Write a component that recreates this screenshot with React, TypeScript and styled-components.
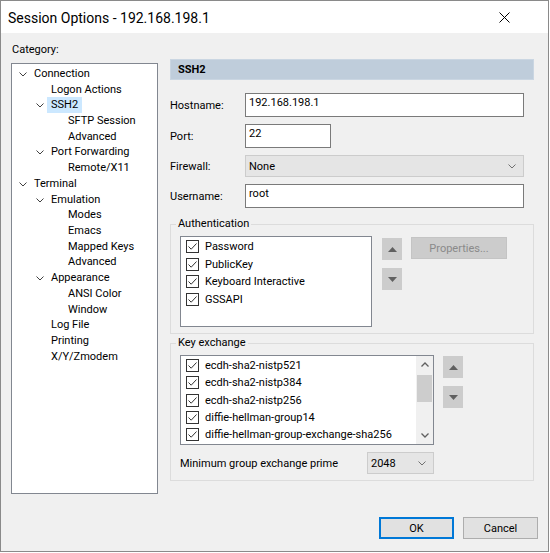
import React from "react";
import styled, { createGlobalStyle } from "styled-components";

// Page reset
const GlobalStyle = createGlobalStyle`
  body {
    margin: 0;
    background: #ffffff;
    font-family: Roboto, "Noto Sans", sans-serif;
  }
`;

type TreeNode = {
  label: string;
  level: number;
  expandable?: boolean;
  selected?: boolean;
};

const TREE: TreeNode[] = [
  { label: "Connection", level: 0, expandable: true },
  { label: "Logon Actions", level: 1 },
  { label: "SSH2", level: 1, expandable: true, selected: true },
  { label: "SFTP Session", level: 2 },
  { label: "Advanced", level: 2 },
  { label: "Port Forwarding", level: 1, expandable: true },
  { label: "Remote/X11", level: 2 },
  { label: "Terminal", level: 0, expandable: true },
  { label: "Emulation", level: 1, expandable: true },
  { label: "Modes", level: 2 },
  { label: "Emacs", level: 2 },
  { label: "Mapped Keys", level: 2 },
  { label: "Advanced", level: 2 },
  { label: "Appearance", level: 1, expandable: true },
  { label: "ANSI Color", level: 2 },
  { label: "Window", level: 2 },
  { label: "Log File", level: 1 },
  { label: "Printing", level: 1 },
  { label: "X/Y/Zmodem", level: 1 },
];

const AUTH_METHODS = ["Password", "PublicKey", "Keyboard Interactive", "GSSAPI"];

const KEX_METHODS = [
  "ecdh-sha2-nistp521",
  "ecdh-sha2-nistp384",
  "ecdh-sha2-nistp256",
  "diffie-hellman-group14",
  "diffie-hellman-group-exchange-sha256",
];

// Small drawings
const Chevron = ({ up = false }: { up?: boolean }) => (
  <svg width="8" height="5" viewBox="0 0 8 5">
    <polyline
      points={up ? "0.5,4.5 4,1 7.5,4.5" : "0.5,0.5 4,4 7.5,0.5"}
      fill="none"
      stroke="#404040"
      strokeWidth="1"
    />
  </svg>
);

const Triangle = ({ up = false }: { up?: boolean }) => (
  <svg width="9" height="5" viewBox="0 0 9 5">
    <polygon points={up ? "0,5 4.5,0 9,5" : "0,0 4.5,5 9,0"} fill="#606060" />
  </svg>
);

const CheckMark = () => (
  <svg width="11" height="11" viewBox="0 0 11 11">
    <polyline
      points="1.5,5.5 4.2,8.2 9.5,2.5"
      fill="none"
      stroke="#333333"
      strokeWidth="1"
    />
  </svg>
);

const CloseIcon = () => (
  <svg width="11" height="11" viewBox="0 0 11 11">
    <path d="M0.5 0.5 L10.5 10.5 M10.5 0.5 L0.5 10.5" stroke="#000" strokeWidth="1" />
  </svg>
);

const CheckItem = ({ label, height }: { label: string; height: number }) => (
  <ListRow $height={height}>
    <CheckBox>
      <CheckMark />
    </CheckBox>
    {label}
  </ListRow>
);

const App: React.FC = () => (
  <>
    <GlobalStyle />
    <Window>
      <TitleBar>
        <TitleText>Session Options - 192.168.198.1</TitleText>
        <CloseButton>
          <CloseIcon />
        </CloseButton>
      </TitleBar>

      <Content>
        <LeftColumn>
          <CategoryLabel>Category:</CategoryLabel>
          <Tree>
            {TREE.map((node, i) => (
              <TreeRow key={i} $level={node.level}>
                <Expander>{node.expandable && <Chevron />}</Expander>
                <TreeLabel $selected={node.selected}>{node.label}</TreeLabel>
              </TreeRow>
            ))}
          </Tree>
        </LeftColumn>

        <RightColumn>
          <PanelHeader>SSH2</PanelHeader>

          <FieldRow $top={13}>
            <FieldLabel>Hostname:</FieldLabel>
            <TextField $width={279} defaultValue="192.168.198.1" readOnly />
          </FieldRow>
          <FieldRow $top={7}>
            <FieldLabel>Port:</FieldLabel>
            <TextField $width={86} defaultValue="22" readOnly />
          </FieldRow>
          <FieldRow $top={7}>
            <FieldLabel>Firewall:</FieldLabel>
            <DropDown $width={279}>
              None
              <Chevron />
            </DropDown>
          </FieldRow>
          <FieldRow $top={7}>
            <FieldLabel>Username:</FieldLabel>
            <TextField $width={279} defaultValue="root" readOnly />
          </FieldRow>

          <GroupBox $top={9}>
            <GroupTitle>Authentication</GroupTitle>
            <GroupRow>
              <ListBox $width={192} $height={91}>
                <ListItems>
                  {AUTH_METHODS.map((m) => (
                    <CheckItem key={m} label={m} height={17.5} />
                  ))}
                </ListItems>
              </ListBox>
              <ArrowColumn $left={10} $top={2}>
                <ArrowButton>
                  <Triangle up />
                </ArrowButton>
                <ArrowButton>
                  <Triangle />
                </ArrowButton>
              </ArrowColumn>
              <DisabledButton>Properties...</DisabledButton>
            </GroupRow>
          </GroupBox>

          <GroupBox $top={2}>
            <GroupTitle>Key exchange</GroupTitle>
            <GroupRow>
              <ListBox $width={254} $height={90}>
                <ListItems>
                  {KEX_METHODS.map((m) => (
                    <CheckItem key={m} label={m} height={17.3} />
                  ))}
                </ListItems>
                <ScrollBar>
                  <ScrollArrow>
                    <Chevron up />
                  </ScrollArrow>
                  <ScrollThumb />
                  <ScrollArrow>
                    <Chevron />
                  </ScrollArrow>
                </ScrollBar>
              </ListBox>
              <ArrowColumn $left={9} $top={1}>
                <ArrowButton>
                  <Triangle up />
                </ArrowButton>
                <ArrowButton>
                  <Triangle />
                </ArrowButton>
              </ArrowColumn>
            </GroupRow>
            <PrimeRow>
              <PrimeLabel>Minimum group exchange prime</PrimeLabel>
              <DropDown $width={67}>
                2048
                <Chevron />
              </DropDown>
            </PrimeRow>
          </GroupBox>
        </RightColumn>
      </Content>

      <Footer>
        <DialogButton $default>OK</DialogButton>
        <DialogButton>Cancel</DialogButton>
      </Footer>
    </Window>
  </>
);

export default App;

// Styled-Components
// Dialog window
const Window = styled.div`
  box-sizing: border-box;
  width: 549px;
  height: 552px;
  display: flex;
  flex-direction: column;
  border: 1px solid #8a8a8a;
  background: #f0f0f0;
  font-size: 11px;
  color: #000;
`;

// Title bar
const TitleBar = styled.div`
  height: 32px;
  display: flex;
  align-items: center;
  justify-content: space-between;
  padding: 0 38px 0 7px;
  background: #ffffff;
`;

const TitleText = styled.span`
  font-size: 14px;
  line-height: 18px;
  margin-top: 1px;
`;

const CloseButton = styled.span`
  display: flex;
  margin-top: 1px;
`;

// Main area
const Content = styled.div`
  flex: 1;
  display: flex;
  align-items: flex-start;
  gap: 12px;
  padding: 10px 0 0 10px;
`;

const LeftColumn = styled.div`
  display: flex;
  flex-direction: column;
  width: 147px;
`;

const CategoryLabel = styled.div`
  line-height: 14px;
  padding-left: 1px;
`;

// Category tree
const Tree = styled.div`
  box-sizing: border-box;
  height: 431px;
  margin-top: 6px;
  padding-top: 2px;
  border: 1px solid #828790;
  background: #ffffff;
`;

const TreeRow = styled.div<{ $level: number }>`
  height: 15.72px;
  display: flex;
  align-items: center;
  padding-left: ${(p) => 7 + p.$level * 17}px;
  white-space: nowrap;
`;

const Expander = styled.span`
  width: 15px;
  flex-shrink: 0;
  display: flex;
  align-items: center;
  padding-top: 1px;
`;

const TreeLabel = styled.span<{ $selected?: boolean }>`
  line-height: 16px;
  padding: 0 4px;
  margin-left: -4px;
  background: ${(p) => (p.$selected ? "#cce8ff" : "transparent")};
`;

// Settings panel
const RightColumn = styled.div`
  width: 364px;
  display: flex;
  flex-direction: column;
  margin-top: 16px;
`;

const PanelHeader = styled.div`
  box-sizing: border-box;
  height: 21px;
  display: flex;
  align-items: center;
  padding-left: 7px;
  background: #bfcddb;
  border: 1px solid #cad6e2;
  font-weight: 700;
`;

const FieldRow = styled.div<{ $top: number }>`
  display: flex;
  align-items: center;
  margin-top: ${(p) => p.$top}px;
`;

const FieldLabel = styled.span`
  width: 75px;
  flex-shrink: 0;
`;

const TextField = styled.input<{ $width: number }>`
  box-sizing: border-box;
  width: ${(p) => p.$width}px;
  height: 24px;
  margin: 0;
  padding: 0 3px 6px;
  border: 1px solid #7a7a7a;
  border-radius: 0;
  background: #ffffff;
  font: 11px Roboto, "Noto Sans", sans-serif;
  color: #000;
  outline: none;
`;

const DropDown = styled.div<{ $width: number }>`
  box-sizing: border-box;
  width: ${(p) => p.$width}px;
  height: 22px;
  display: flex;
  align-items: center;
  justify-content: space-between;
  padding: 0 7px 0 3px;
  border: 1px solid #cccccc;
  background: #e5e5e5;

  svg polyline {
    stroke: #707070;
  }
`;

// Group boxes
const GroupBox = styled.fieldset<{ $top: number }>`
  margin: ${(p) => p.$top}px 0 0;
  padding: 5px 8px 6px 9px;
  border: 1px solid #dcdcdc;
  min-width: 0;
`;

const GroupTitle = styled.legend`
  padding: 0 2px;
  margin-left: -4px;
  line-height: 14px;
`;

const GroupRow = styled.div`
  display: flex;
  align-items: flex-start;
`;

const ListBox = styled.div<{ $width: number; $height: number }>`
  box-sizing: border-box;
  width: ${(p) => p.$width}px;
  height: ${(p) => p.$height}px;
  display: flex;
  border: 1px solid #828790;
  background: #ffffff;
`;

const ListItems = styled.div`
  flex: 1;
  padding-top: 1px;
`;

const ListRow = styled.div<{ $height: number }>`
  height: ${(p) => p.$height}px;
  display: flex;
  align-items: center;
  padding-left: 5px;
  white-space: nowrap;
`;

const CheckBox = styled.span`
  box-sizing: border-box;
  width: 13px;
  height: 13px;
  display: flex;
  align-items: center;
  justify-content: center;
  margin-right: 6px;
  border: 1px solid #333333;
  background: #ffffff;
`;

const ScrollBar = styled.div`
  width: 17px;
  display: flex;
  flex-direction: column;
  background: #f0f0f0;
`;

const ScrollArrow = styled.div`
  height: 17px;
  display: flex;
  align-items: center;
  justify-content: center;

  svg polyline {
    stroke: #606060;
    stroke-width: 1.3;
  }

  &:last-child {
    margin-top: auto;
  }
`;

const ScrollThumb = styled.div`
  height: 27px;
  margin: 2px 1px 0;
  background: #cdcdcd;
`;

const ArrowColumn = styled.div<{ $left: number; $top: number }>`
  display: flex;
  flex-direction: column;
  gap: 8px;
  margin: ${(p) => p.$top}px 0 0 ${(p) => p.$left}px;
`;

const ArrowButton = styled.div`
  width: 20px;
  height: 22px;
  display: flex;
  align-items: center;
  justify-content: center;
  background: #cccccc;
`;

const DisabledButton = styled.div`
  box-sizing: border-box;
  width: 96px;
  height: 22px;
  display: flex;
  align-items: center;
  justify-content: center;
  margin: 1px 0 0 9px;
  border: 1px solid #c4c4c4;
  background: #cccccc;
  color: #8a8a8a;
`;

const PrimeRow = styled.div`
  display: flex;
  align-items: center;
  margin-top: 7px;
`;

const PrimeLabel = styled.span`
  width: 187px;
`;

// Dialog buttons
const Footer = styled.div`
  display: flex;
  justify-content: flex-end;
  gap: 9px;
  padding: 0 10px 12px 0;
`;

const DialogButton = styled.div<{ $default?: boolean }>`
  box-sizing: border-box;
  width: 75px;
  height: 22px;
  display: flex;
  align-items: center;
  justify-content: center;
  background: #e1e1e1;
  border: 1px solid ${(p) => (p.$default ? "#0078d7" : "#adadad")};
  box-shadow: ${(p) => (p.$default ? "inset 0 0 0 1px #0078d7" : "none")};
`;
